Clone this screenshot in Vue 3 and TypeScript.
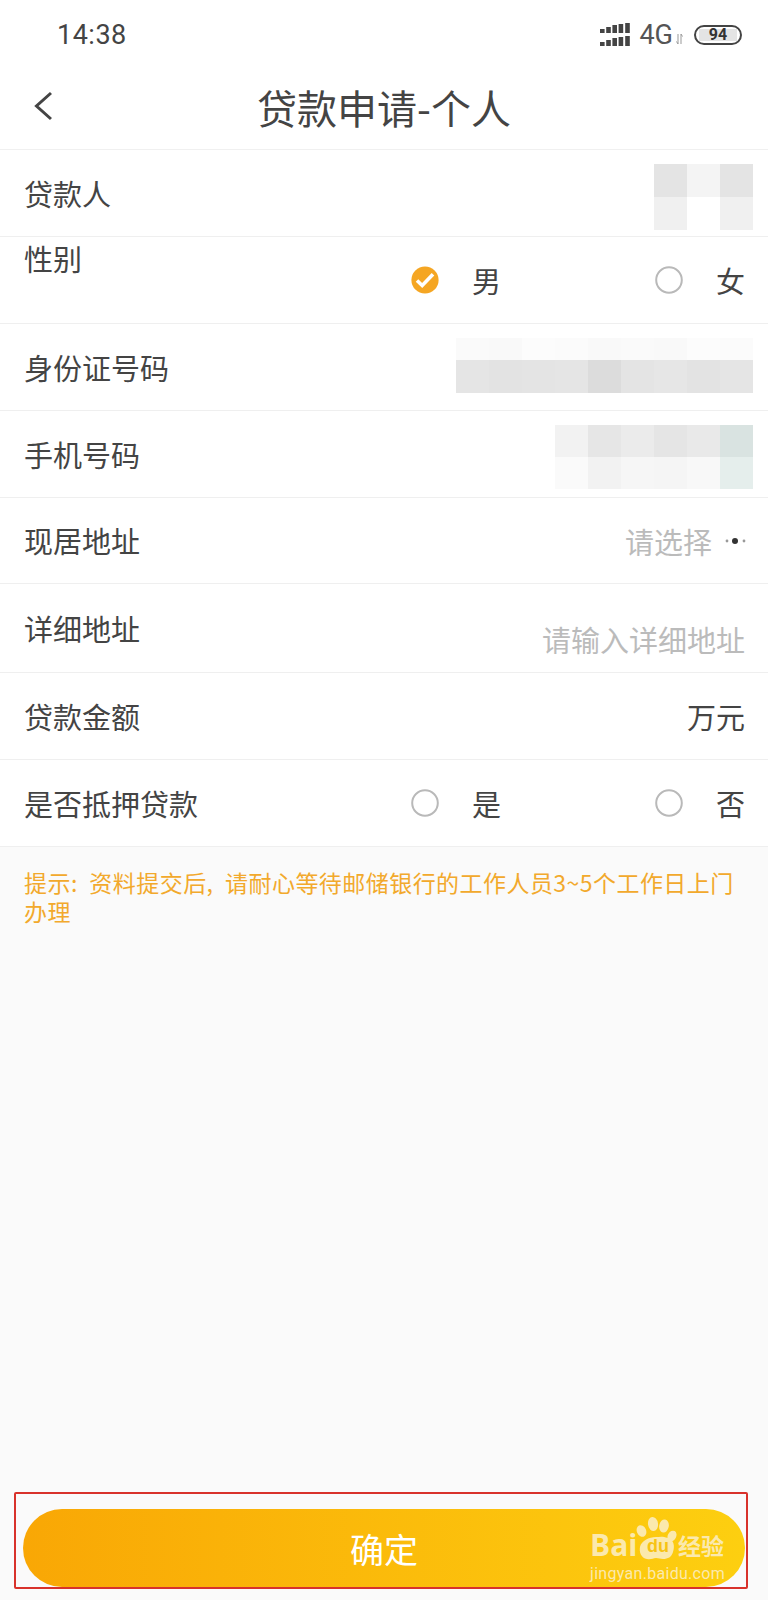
<template>
  <div class="page">
    <div class="status-bar">
      <span class="time">14:38</span>
      <div class="status-icons">
        <svg class="signal" width="30" height="23" viewBox="0 0 30 23">
          <g fill="#444">
            <rect v-for="bar in signalBars" :key="'t' + bar.x" :x="bar.x" :y="10 - bar.h" width="4.6" :height="bar.h" />
            <rect v-for="bar in signalBars" :key="'b' + bar.x" :x="bar.x" :y="23 - bar.h" width="4.6" :height="bar.h" />
          </g>
        </svg>
        <span class="net">4G</span>
        <svg class="arrows" width="7" height="12" viewBox="0 0 7 12">
          <path d="M2 1v10M2 11L0.5 8.5M5 11V1M5 1l1.5 2.5" fill="none" stroke="#999" stroke-width="1" />
        </svg>
        <div class="battery"><span>94</span></div>
      </div>
    </div>

    <header class="nav">
      <svg class="back" width="24" height="32" viewBox="0 0 24 32">
        <path d="M20 3L5.500 16 20 29" fill="none" stroke="#444" stroke-width="3" />
      </svg>
      <h1>贷款申请-个人</h1>
    </header>

    <section class="form">
      <div v-for="row in rows" :key="row.label" class="row" :class="row.kind">
        <span class="label">{{ row.label }}</span>

        <div v-if="row.mosaic" class="mosaic" :style="mosaicStyle(row.mosaic)">
          <i v-for="(color, i) in row.mosaic.cells" :key="i" :style="{ background: color }"></i>
        </div>

        <div v-else-if="row.options" class="options">
          <div v-for="opt in row.options" :key="opt" class="option">
            <svg v-if="opt === row.checked" class="radio" width="28" height="28" viewBox="0 0 28 28">
              <circle cx="14" cy="14" r="13.6" fill="#f5a623" />
              <path d="M6 14.5l5.2 5L22 8.2" fill="none" stroke="#fff" stroke-width="3.6" />
            </svg>
            <svg v-else class="radio" width="28" height="28" viewBox="0 0 28 28">
              <circle cx="14" cy="14" r="12.8" fill="#fff" stroke="#b9b9b9" stroke-width="2" />
            </svg>
            <span>{{ opt }}</span>
          </div>
        </div>

        <div v-else-if="row.placeholder" class="hint-value">
          <span>{{ row.placeholder }}</span>
          <svg v-if="row.more" class="more" width="21" height="8" viewBox="0 0 21 8">
            <circle cx="2" cy="4" r="1.4" fill="#999" />
            <circle cx="10" cy="4" r="3" fill="#333" />
            <circle cx="19" cy="4" r="1.4" fill="#999" />
          </svg>
        </div>

        <span v-else-if="row.unit" class="unit">{{ row.unit }}</span>
      </div>
    </section>

    <p class="tip">提示: 资料提交后, 请耐心等待邮储银行的工作人员3~5个工作日上门办理</p>

    <footer class="footer">
      <button type="button" class="submit">确定</button>
      <div class="red-frame"></div>
      <div class="watermark">
        <div class="wm-top">
          <span class="wm-bai">Bai</span>
          <span class="wm-paw">
            <svg width="42" height="44" viewBox="0 0 42 44">
              <g fill="#fbe9ad">
                <ellipse cx="5.5" cy="15" rx="4.6" ry="6" transform="rotate(-25 5.5 15)" />
                <ellipse cx="17" cy="8" rx="5" ry="7" transform="rotate(-8 17 8)" />
                <ellipse cx="28" cy="10" rx="4.800" ry="6.600" transform="rotate(10 28 10)" />
                <ellipse cx="36" cy="20" rx="4.2" ry="5.6" transform="rotate(28 36 20)" />
                <path d="M20 21c4 0 6-1 12 1 6 2 7 8 5 14-1.500 5-5 7-10 7-3 0-4-1-7-1s-5 2-9 1C5 42 3 36 4 31c1-6 9-10 16-10z" />
              </g>
            </svg>
            <span class="wm-du">du</span>
          </span>
          <span class="wm-cn">经验</span>
        </div>
        <div class="wm-url">jingyan.baidu.com</div>
      </div>
    </footer>
  </div>
</template>

<script setup lang="ts">
interface Mosaic {
  cols: number;
  rowHeights: number[];
  top: number;
  cells: string[];
}

interface FormRow {
  label: string;
  kind?: string;
  mosaic?: Mosaic;
  options?: string[];
  checked?: string;
  placeholder?: string;
  more?: boolean;
  unit?: string;
}

const signalBars = [
  { x: 0, h: 4 },
  { x: 6.2, h: 6 },
  { x: 12.4, h: 8 },
  { x: 18.6, h: 9 },
  { x: 25.2, h: 10 },
];

const rows: FormRow[] = [
  {
    label: "贷款人",
    mosaic: {
      cols: 3,
      rowHeights: [33, 33],
      top: 7,
      cells: ["#e4e4e4", "#f4f4f4", "#e4e4e4", "#f0f0f0", "#ffffff", "#f0f0f0"],
    },
  },
  { label: "性别", kind: "gender", options: ["男", "女"], checked: "男" },
  {
    label: "身份证号码",
    mosaic: {
      cols: 9,
      rowHeights: [22, 33],
      top: -3,
      cells: [
        "#fafafa", "#f9f9f9", "#fcfcfc", "#fbfbfb", "#f9f9f9", "#fafafa", "#f9f9f9", "#fcfcfc", "#fbfbfb",
        "#e5e5e5", "#e3e3e3", "#e4e4e4", "#e5e5e5", "#dcdcdc", "#e4e4e4", "#e6e6e6", "#e3e3e3", "#e5e5e5",
      ],
    },
  },
  {
    label: "手机号码",
    mosaic: {
      cols: 6,
      rowHeights: [32, 32],
      top: 6,
      cells: [
        "#f2f2f2", "#e6e6e6", "#ebebeb", "#e5e5e5", "#e9e9e9", "#d9e3e1",
        "#fafafa", "#f2f2f2", "#f6f6f6", "#f5f5f5", "#f8f8f8", "#e5eeec",
      ],
    },
  },
  { label: "现居地址", placeholder: "请选择", more: true, kind: "short" },
  { label: "详细地址", placeholder: "请输入详细地址", kind: "detail" },
  { label: "贷款金额", unit: "万元" },
  { label: "是否抵押贷款", options: ["是", "否"] },
];

function mosaicStyle(m: Mosaic) {
  return {
    gridTemplateColumns: `repeat(${m.cols}, 33px)`,
    gridTemplateRows: m.rowHeights.map((h) => `${h}px`).join(" "),
    marginTop: `${m.top}px`,
  };
}
</script>

<style scoped>
.page {
  display: flex;
  flex-direction: column;
  height: 1600px;
  background: #fafafa;
  color: #444;
  font-family: "Noto Sans CJK SC", "Liberation Sans", sans-serif;
  overflow: hidden;
}

.status-bar {
  display: flex;
  align-items: center;
  justify-content: space-between;
  height: 68px;
  padding: 1px 26px 0 57px;
  background: #fff;
  box-sizing: border-box;
}

.time {
  font-family: Roboto, sans-serif;
  font-size: 27px;
  letter-spacing: 0.5px;
  color: #444;
}

.status-icons {
  display: flex;
  align-items: center;
}

.net {
  margin-left: 9px;
  font-family: Roboto, sans-serif;
  font-size: 27px;
  color: #555;
}

.arrows {
  margin: 8px 0 0 3px;
}

.battery {
  display: flex;
  align-items: center;
  justify-content: center;
  width: 48px;
  height: 20px;
  margin-left: 11px;
  box-sizing: border-box;
  border: 2px solid #444;
  border-radius: 10px;
  background: linear-gradient(#e4e4e4, #e4e4e4) center / 38px 12px no-repeat;
}

.battery span {
  font-family: Roboto, sans-serif;
  font-size: 16px;
  font-weight: 700;
  line-height: 1;
  color: #333;
}

.nav {
  position: relative;
  display: flex;
  align-items: center;
  justify-content: center;
  height: 82px;
  background: #fff;
  border-bottom: 1px solid #f0f0f0;
  box-sizing: border-box;
}

.back {
  position: absolute;
  left: 31px;
  top: 22px;
}

.nav h1 {
  margin: -4px 0 0;
  font-size: 40px;
  font-weight: 400;
  line-height: 1.2;
  color: #444;
}

.form {
  display: flex;
  flex-direction: column;
  background: #fff;
}

.row {
  display: flex;
  align-items: center;
  justify-content: space-between;
  height: 87px;
  padding: 0 23px 0 24px;
  box-sizing: border-box;
  border-bottom: 1px solid #efefef;
  font-size: 29px;
  color: #444;
}

.row.short {
  height: 86px;
}

.row.detail {
  height: 89px;
}

.label {
  line-height: 36px;
  margin-top: -1px;
}

.gender .label {
  align-self: flex-start;
  margin-top: 0;
  padding-top: 3px;
}

.mosaic {
  display: grid;
  margin-right: -8px;
}

.options {
  display: flex;
  gap: 154px;
}

.option {
  display: flex;
  align-items: center;
  gap: 33px;
  line-height: 36px;
}

.hint-value {
  display: flex;
  align-items: center;
  color: #bbb;
  line-height: 36px;
}

.more {
  margin: 0 -1px 0 13px;
}

.detail .hint-value {
  margin-top: 22px;
}

.tip {
  margin: 21px 24px 0;
  font-size: 23px;
  line-height: 29px;
  letter-spacing: 0.45px;
  word-spacing: 6px;
  color: #f2a92c;
}

.footer {
  position: relative;
  margin-top: auto;
  padding: 0 23px 13px;
}

.submit {
  display: block;
  width: 100%;
  height: 78px;
  padding: 0;
  border: 0;
  border-radius: 39px;
  background: linear-gradient(90deg, #f9a705, #fdcf10);
  color: #fff;
  font-family: inherit;
  font-size: 34px;
}

.red-frame {
  position: absolute;
  left: 14px;
  top: -17px;
  width: 734px;
  height: 97px;
  box-sizing: border-box;
  border: 2px solid #d8322b;
  border-radius: 2px;
  pointer-events: none;
}

.watermark {
  position: absolute;
  left: 590px;
  top: 7px;
  width: 140px;
  color: #fbe9ad;
}

.wm-top {
  display: flex;
  align-items: flex-end;
  height: 44px;
}

.wm-bai {
  width: 46px;
  font-family: "Open Sans", sans-serif;
  font-size: 30px;
  font-weight: 700;
  line-height: 30px;
}

.wm-paw {
  position: relative;
  width: 42px;
  height: 44px;
}

.wm-paw svg {
  display: block;
}

.wm-du {
  position: absolute;
  left: 11px;
  top: 20px;
  font-family: "Liberation Sans", sans-serif;
  font-size: 18px;
  font-weight: 700;
  line-height: 20px;
  color: #f7c313;
}

.wm-cn {
  font-size: 23px;
  font-weight: 700;
  line-height: 29px;
}

.wm-url {
  margin-top: 4px;
  font-family: Roboto, sans-serif;
  font-size: 16px;
  letter-spacing: 0.3px;
  line-height: 20px;
  white-space: nowrap;
}
</style>

<style>
html,
body {
  margin: 0;
  background: #fafafa;
}
</style>
